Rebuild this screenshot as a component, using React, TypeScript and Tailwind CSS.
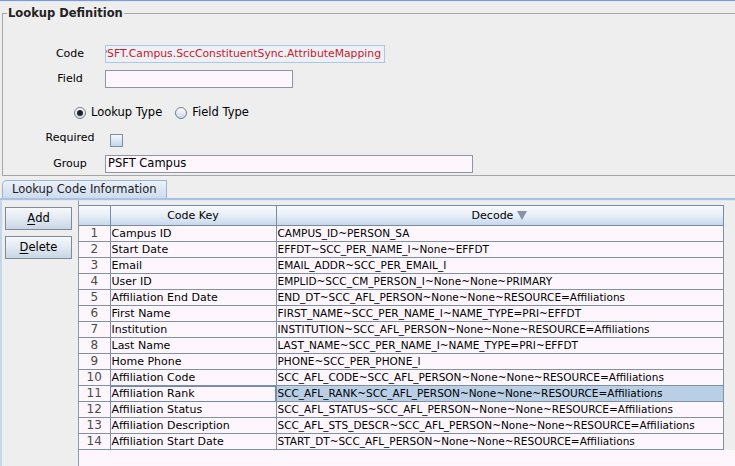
import React from 'react';

const rows: [string, string][] = [
  ['Campus ID', 'CAMPUS_ID~PERSON_SA'],
  ['Start Date', 'EFFDT~SCC_PER_NAME_I~None~EFFDT'],
  ['Email', 'EMAIL_ADDR~SCC_PER_EMAIL_I'],
  ['User ID', 'EMPLID~SCC_CM_PERSON_I~None~None~PRIMARY'],
  ['Affiliation End Date', 'END_DT~SCC_AFL_PERSON~None~None~RESOURCE=Affiliations'],
  ['First Name', 'FIRST_NAME~SCC_PER_NAME_I~NAME_TYPE=PRI~EFFDT'],
  ['Institution', 'INSTITUTION~SCC_AFL_PERSON~None~None~RESOURCE=Affiliations'],
  ['Last Name', 'LAST_NAME~SCC_PER_NAME_I~NAME_TYPE=PRI~EFFDT'],
  ['Home Phone', 'PHONE~SCC_PER_PHONE_I'],
  ['Affiliation Code', 'SCC_AFL_CODE~SCC_AFL_PERSON~None~None~RESOURCE=Affiliations'],
  ['Affiliation Rank', 'SCC_AFL_RANK~SCC_AFL_PERSON~None~None~RESOURCE=Affiliations'],
  ['Affiliation Status', 'SCC_AFL_STATUS~SCC_AFL_PERSON~None~None~RESOURCE=Affiliations'],
  ['Affiliation Description', 'SCC_AFL_STS_DESCR~SCC_AFL_PERSON~None~None~RESOURCE=Affiliations'],
  ['Affiliation Start Date', 'START_DT~SCC_AFL_PERSON~None~None~RESOURCE=Affiliations'],
];

const SELECTED = 10;

function Label({ children }: { children: React.ReactNode }) {
  return (
    <div className="w-[102px] shrink-0 flex">
      <div className="ml-[38px] w-[58px] text-center">{children}</div>
    </div>
  );
}

function Radio({ checked }: { checked?: boolean }) {
  return (
    <span className="w-[12px] h-[12px] rounded-full border border-[#6e7d8f] bg-gradient-to-b from-[#ffffff] to-[#c9d8e8] flex items-center justify-center">
      {checked && <span className="w-[6px] h-[6px] rounded-full bg-[#222]" />}
    </span>
  );
}

function JButton({ mnemonic, rest }: { mnemonic: string; rest: string }) {
  return (
    <button className="w-[67px] h-[23px] border border-[#7d8c9c] bg-gradient-to-b from-[#f6f8fb] via-[#e2e9f1] to-[#c8d6e4] text-[11.5px] text-black flex items-center justify-center">
      <span className="underline underline-offset-2">{mnemonic}</span>
      {rest}
    </button>
  );
}

export default function App() {
  return (
    <div className="w-[735px] h-[466px] overflow-hidden bg-[#eeeeee] font-['DejaVu_Sans',sans-serif] text-[11px] text-black flex flex-col">
      <div className="h-px shrink-0 bg-[#7b9bd6]" />
      <div className="h-px shrink-0 bg-[#dfe6f2]" />

      {/* Lookup Definition group */}
      <fieldset className="ml-[2px] mt-[4px] h-[170px] shrink-0 border border-r-0 border-[#a5a5a5]">
        <legend className="ml-[4px] px-px font-bold text-[11.5px] leading-[14px] text-[#222]">
          Lookup Definition
        </legend>
        <div className="flex flex-col">
          <div className="flex items-center h-[18px] mt-[25px]">
            <Label>Code</Label>
            <div className="w-[280px] h-[18px] border border-[#a9c9e6] bg-[#edf1f6] flex justify-end items-center overflow-hidden whitespace-nowrap pr-[3px] text-[10.8px] text-[#c8202a]">
              PSFT.Campus.SccConstituentSync.AttributeMapping
            </div>
          </div>
          <div className="flex items-center h-[18px] mt-[7px]">
            <Label>Field</Label>
            <div className="w-[188px] h-[18px] border border-[#8e95a6] bg-[#fdf6fd]" />
          </div>
          <div className="flex items-center h-[14px] mt-[18px] pl-[71px] text-[11.5px]">
            <Radio checked />
            <span className="ml-[5px]">Lookup Type</span>
            <span className="ml-[13px]"><Radio /></span>
            <span className="ml-[5px]">Field Type</span>
          </div>
          <div className="flex items-start h-[14px] mt-[10px]">
            <Label>Required</Label>
            <div className="ml-[5px] mt-[4px] w-[13px] h-[13px] border border-[#7f8ea0] bg-gradient-to-b from-[#f4f7fa] to-[#c5d6e8]" />
          </div>
          <div className="flex items-center h-[18px] mt-[11px]">
            <Label>Group</Label>
            <div className="w-[368px] h-[18px] border border-[#8e95a6] bg-[#fdf6fd] flex items-center pl-[2px] text-[11.5px]">
              PSFT Campus
            </div>
          </div>
        </div>
      </fieldset>

      {/* Tab strip */}
      <div className="flex pl-[2px] mt-[4px] shrink-0">
        <div className="h-[18px] w-[165px] border border-b-0 border-[#9db4d2] rounded-tl-[5px] rounded-tr-[1px] bg-gradient-to-b from-[#eaf1f9] to-[#cddcee] flex items-center pl-[9px] text-[11.5px] text-[#222]">
          Lookup Code Information
        </div>
      </div>

      {/* Tab content */}
      <div className="flex-1 flex border-t-2 border-[#aac2e0] min-h-0">
        <div className="w-[78px] shrink-0 border-l-2 border-t border-[#c5d6ea] border-t-[#dde7f4] flex flex-col gap-[6px] pt-[6px] pl-[3px]">
          <JButton mnemonic="A" rest="dd" />
          <JButton mnemonic="D" rest="elete" />
        </div>
        <div className="flex-1 flex flex-col border-l border-[#8d9bab] border-t border-t-[#dde7f4] pt-[4px]">
          <table className="table-fixed border-collapse w-[644px] text-[11px] leading-[15px]">
            <colgroup>
              <col className="w-[31px]" />
              <col className="w-[166px]" />
              <col className="w-[447px]" />
            </colgroup>
            <thead>
              <tr className="h-[20px] bg-gradient-to-b from-[#f8fafd] via-[#e6eef7] to-[#c3d5ea]">
                <th className="border border-l-0 border-[#7a8aa0] font-normal" />
                <th className="border border-[#7a8aa0] font-normal text-center">Code Key</th>
                <th className="border border-[#7a8aa0] font-normal text-center">
                  <span className="inline-flex items-center gap-[4px]">
                    Decode
                    <svg width="10" height="9" viewBox="0 0 10 9">
                      <path d="M0 0 H10 L5 9 Z" fill="#8593a6" />
                    </svg>
                  </span>
                </th>
              </tr>
            </thead>
            <tbody className="bg-[#fdf7fd]">
              {rows.map(([key, decode], i) => (
                <tr key={i} className="h-[16px]">
                  <td className="border border-l-0 border-[#8090a8] text-center text-[12px] text-[#4a4a4a]">{i + 1}</td>
                  <td
                    className={
                      i === SELECTED
                        ? 'border border-[#8090a8] pl-px whitespace-nowrap overflow-hidden outline outline-1 -outline-offset-1 outline-[#6c88b4]'
                        : 'border border-[#8090a8] pl-px whitespace-nowrap overflow-hidden'
                    }
                  >
                    {key}
                  </td>
                  <td
                    className={
                      i === SELECTED
                        ? 'border border-[#8090a8] pl-px whitespace-nowrap overflow-hidden text-[10.5px] bg-[#b9cfe6]'
                        : 'border border-[#8090a8] pl-px whitespace-nowrap overflow-hidden text-[10.5px]'
                    }
                  >
                    {decode}
                  </td>
                </tr>
              ))}
            </tbody>
          </table>
          <div className="flex-1 bg-[#fdf7fd]" />
        </div>
      </div>
    </div>
  );
}
